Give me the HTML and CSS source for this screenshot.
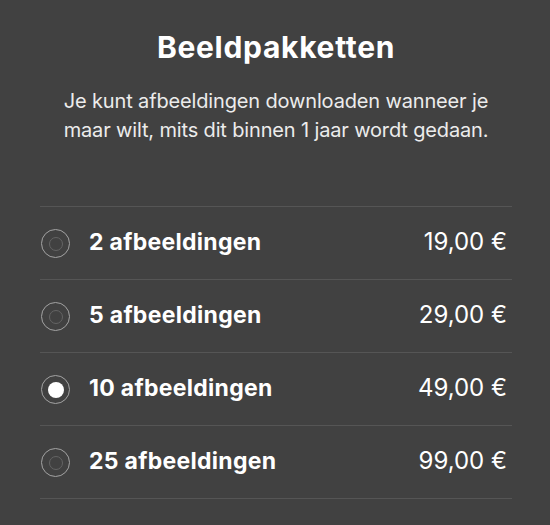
FILE: index.html
```html
<!DOCTYPE html>
<html lang="nl">
<head>
<meta charset="utf-8">
<title>Beeldpakketten</title>
<link rel="stylesheet" href="styles.css">
</head>
<body>
<main class="panel">
  <header class="intro">
    <h1 class="title">Beeldpakketten</h1>
    <p class="lead">Je kunt afbeeldingen downloaden wanneer je maar wilt, mits dit binnen 1 jaar wordt gedaan.</p>
  </header>
  <ul class="packages">
    <li class="package">
      <span class="radio"></span>
      <span class="label">2 afbeeldingen</span>
      <span class="price">19,00 €</span>
    </li>
    <li class="package">
      <span class="radio"></span>
      <span class="label">5 afbeeldingen</span>
      <span class="price">29,00 €</span>
    </li>
    <li class="package">
      <span class="radio radio-on"></span>
      <span class="label">10 afbeeldingen</span>
      <span class="price">49,00 €</span>
    </li>
    <li class="package">
      <span class="radio"></span>
      <span class="label">25 afbeeldingen</span>
      <span class="price">99,00 €</span>
    </li>
  </ul>
</main>
</body>
</html>
```

FILE: styles.css
```css
html, body {
  margin: 0;
  padding: 0;
  background: #414141;
}
body {
  font-family: Inter, "Noto Sans", sans-serif;
  color: #ffffff;
}
.panel {
  width: 472px;
  margin: 0 0 0 40px;
  padding-top: 28px;
}
.intro {
  text-align: center;
}
.title {
  margin: 0;
  font-size: 30px;
  line-height: 38px;
  font-weight: 700;
  letter-spacing: 0.7px;
}
.lead {
  margin: 21px auto 0;
  width: 444px;
  font-size: 20px;
  line-height: 29px;
  letter-spacing: -0.15px;
  color: #ececec;
}
.packages {
  list-style: none;
  margin: 61px 0 0;
  padding: 0;
  border-top: 1px solid #555555;
}
.package {
  display: flex;
  align-items: center;
  height: 71px;
  padding: 1px 5px 0 1px;
  border-bottom: 1px solid #555555;
}
.radio {
  position: relative;
  box-sizing: border-box;
  width: 29px;
  height: 29px;
  border: 1.5px solid #a3a3a3;
  border-radius: 50%;
  flex: none;
}
.radio::after {
  content: "";
  position: absolute;
  left: 50%;
  top: 50%;
  width: 14px;
  height: 14px;
  box-sizing: border-box;
  margin: -7px 0 0 -7px;
  border: 1.5px solid #646464;
  border-radius: 50%;
}
.radio-on::after {
  width: 16px;
  height: 16px;
  margin: -8px 0 0 -8px;
  border: none;
  background: #ffffff;
}
.label {
  margin: 0 0 4px 19px;
  font-size: 23px;
  font-weight: 700;
  letter-spacing: 0.3px;
  flex: 1;
}
.price {
  margin-bottom: 4px;
  font-size: 24px;
  font-weight: 400;
}
```
